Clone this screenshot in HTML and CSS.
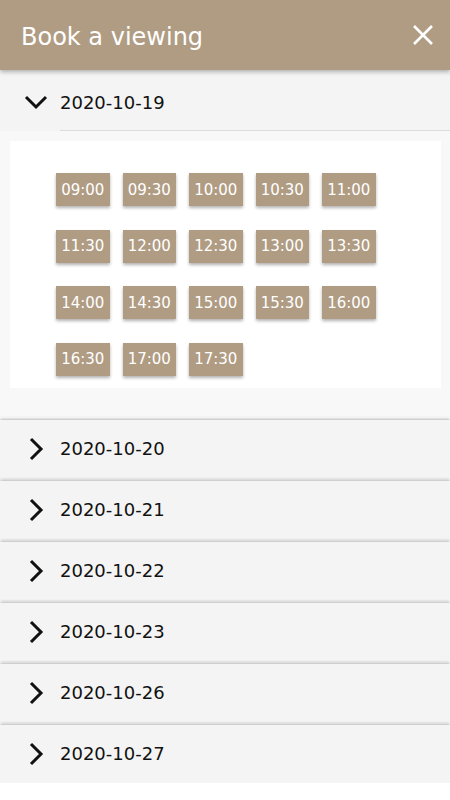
FILE: index.html
```html
<!DOCTYPE html>
<html lang="en">
<head>
    <meta charset="UTF-8">
    <meta name="viewport" content="width=device-width, initial-scale=1.0">
    <title>Book a viewing</title>
    <link rel="stylesheet" href="styles.css">
</head>
<body>
    <div class="topbar">
        <h1>Book a viewing</h1>
        <svg class="close" width="20" height="20" viewBox="0 0 20 20">
            <path d="M1 1L19 19M19 1L1 19" stroke="#fff" stroke-width="2.6" fill="none"/>
        </svg>
    </div>

    <div class="day open">
        <div class="day-head">
            <svg class="chev" width="24" height="24" viewBox="0 0 24 24">
                <polyline points="2,7 12,17 22,7" stroke="#111" stroke-width="3" fill="none"/>
            </svg>
            <span class="day-label">2020-10-19</span>
        </div>
        <div class="day-body">
            <div class="slots">
                <button class="slot">09:00</button>
                <button class="slot">09:30</button>
                <button class="slot">10:00</button>
                <button class="slot">10:30</button>
                <button class="slot">11:00</button>
                <button class="slot">11:30</button>
                <button class="slot">12:00</button>
                <button class="slot">12:30</button>
                <button class="slot">13:00</button>
                <button class="slot">13:30</button>
                <button class="slot">14:00</button>
                <button class="slot">14:30</button>
                <button class="slot">15:00</button>
                <button class="slot">15:30</button>
                <button class="slot">16:00</button>
                <button class="slot">16:30</button>
                <button class="slot">17:00</button>
                <button class="slot">17:30</button>
            </div>
        </div>
    </div>

    <div class="day">
        <div class="day-head">
            <svg class="chev" width="24" height="24" viewBox="0 0 24 24">
                <polyline points="7,2 17,12 7,22" stroke="#111" stroke-width="3" fill="none"/>
            </svg>
            <span class="day-label">2020-10-20</span>
        </div>
    </div>
    <div class="day">
        <div class="day-head">
            <svg class="chev" width="24" height="24" viewBox="0 0 24 24">
                <polyline points="7,2 17,12 7,22" stroke="#111" stroke-width="3" fill="none"/>
            </svg>
            <span class="day-label">2020-10-21</span>
        </div>
    </div>
    <div class="day">
        <div class="day-head">
            <svg class="chev" width="24" height="24" viewBox="0 0 24 24">
                <polyline points="7,2 17,12 7,22" stroke="#111" stroke-width="3" fill="none"/>
            </svg>
            <span class="day-label">2020-10-22</span>
        </div>
    </div>
    <div class="day">
        <div class="day-head">
            <svg class="chev" width="24" height="24" viewBox="0 0 24 24">
                <polyline points="7,2 17,12 7,22" stroke="#111" stroke-width="3" fill="none"/>
            </svg>
            <span class="day-label">2020-10-23</span>
        </div>
    </div>
    <div class="day">
        <div class="day-head">
            <svg class="chev" width="24" height="24" viewBox="0 0 24 24">
                <polyline points="7,2 17,12 7,22" stroke="#111" stroke-width="3" fill="none"/>
            </svg>
            <span class="day-label">2020-10-26</span>
        </div>
    </div>
    <div class="day">
        <div class="day-head">
            <svg class="chev" width="24" height="24" viewBox="0 0 24 24">
                <polyline points="7,2 17,12 7,22" stroke="#111" stroke-width="3" fill="none"/>
            </svg>
            <span class="day-label">2020-10-27</span>
        </div>
    </div>
</body>
</html>
```

FILE: styles.css
```css
body {
    margin: 0;
    font-family: 'DejaVu Sans', 'Open Sans', sans-serif;
    background-color: #fff;
    color: #111;
}
.topbar {
    height: 70px;
    background-color: #b09c83;
    display: flex;
    align-items: center;
    justify-content: space-between;
    padding: 0 17px 0 21px;
    box-shadow: 0 2px 4px rgba(0,0,0,0.3);
    position: relative;
    z-index: 2;
}
.topbar h1 {
    margin: 4px 0 0 0;
    color: #fff;
    font-size: 24px;
    font-weight: 400;
}
.close {
    display: block;
}
.day {
    background-color: #f4f4f4;
    box-shadow: 0 -1px 3px rgba(0,0,0,0.3);
    margin-top: 3px;
}
.day.open {
    margin-top: 0;
    padding-top: 3px;
    background-color: #f8f8f8;
    box-shadow: none;
}
.day-head {
    height: 58px;
    display: flex;
    align-items: center;
    padding-left: 24px;
    background-color: #f4f4f4;
}
.open .day-head {
    position: relative;
}
.open .day-head::after {
    content: "";
    position: absolute;
    left: 60px;
    right: 0;
    bottom: 0;
    height: 1px;
    background-color: #dcdcdc;
}
.chev {
    display: block;
    margin-right: 12px;
}
.day-label {
    font-size: 18px;
}
.day-body {
    padding: 10px 9px 29px 10px;
}
.slots {
    background-color: #fff;
    padding: 32px 0 12px 46px;
    display: grid;
    grid-template-columns: repeat(5, 53.5px);
    grid-auto-rows: 33px;
    column-gap: 13px;
    row-gap: 23.5px;
}
.slot {
    height: 33px;
    padding: 0;
    border: none;
    background-color: #b09c83;
    color: #fff;
    font-family: inherit;
    font-size: 15px;
    box-shadow: 0 2px 3px rgba(0,0,0,0.3);
}
```
